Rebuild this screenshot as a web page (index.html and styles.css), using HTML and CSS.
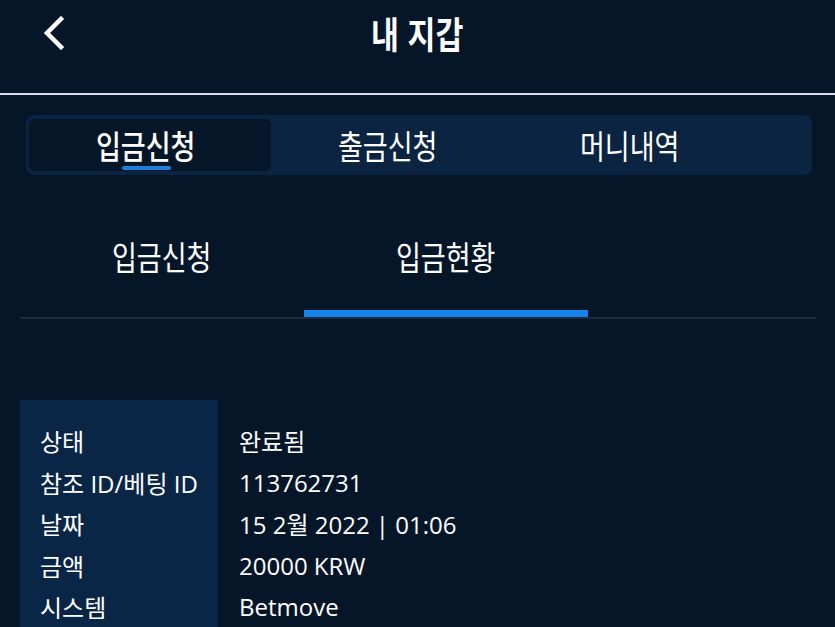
FILE: index.html
```html
<!DOCTYPE html>
<html lang="ko">

<head>
    <meta charset="UTF-8">
    <meta name="viewport" content="width=device-width, initial-scale=1.0">
    <title>내 지갑</title>
    <link rel="stylesheet" href="styles.css">
</head>

<body>
    <div class="header">
        <a class="back" href="#">
            <svg width="24" height="34" viewBox="0 0 24 34">
                <polyline points="20,3 6,17 20,31" fill="none" stroke="#fff" stroke-width="4.5" stroke-linecap="square" />
            </svg>
        </a>
        <h1 class="title"><span class="narrow">내 지갑</span></h1>
    </div>

    <div class="tab-group">
        <div class="tab active"><span class="narrow">입금신청</span></div>
        <div class="tab"><span class="narrow">출금신청</span></div>
        <div class="tab"><span class="narrow">머니내역</span></div>
    </div>

    <div class="sub-tabs">
        <div class="sub-tab"><span class="narrow">입금신청</span></div>
        <div class="sub-tab active"><span class="narrow">입금현황</span></div>
    </div>

    <table class="details">
        <tr>
            <th>상태</th>
            <td>완료됨</td>
        </tr>
        <tr>
            <th>참조 ID/베팅 ID</th>
            <td>113762731</td>
        </tr>
        <tr>
            <th>날짜</th>
            <td>15 2월 2022 | 01:06</td>
        </tr>
        <tr>
            <th>금액</th>
            <td>20000 KRW</td>
        </tr>
        <tr>
            <th>시스템</th>
            <td>Betmove</td>
        </tr>
    </table>
</body>

</html>
```

FILE: styles.css
```css
body {
    margin: 0;
    background-color: #061629;
    color: #fff;
    font-family: "Noto Sans CJK KR", sans-serif;
    overflow: hidden;
}

.narrow {
    display: inline-block;
    transform: scaleX(0.82);
}

.header {
    height: 93px;
    border-bottom: 2px solid #d8dde3;
    position: relative;
}

.back {
    position: absolute;
    left: 41px;
    top: 16px;
}

.title {
    margin: 0;
    padding-top: 10px;
    text-align: center;
    font-size: 37px;
    font-weight: bold;
    line-height: 46px;
}

.tab-group {
    display: flex;
    margin: 20px 23px 0 26px;
    padding: 4px 3px;
    height: 52px;
    background-color: #0a2442;
    border-radius: 8px;
}

.tab {
    width: 242px;
    padding-right: 8px;
    box-sizing: border-box;
    text-align: center;
    font-size: 33px;
    font-weight: normal;
    line-height: 52px;
    border-radius: 6px;
    position: relative;
}

.tab.active {
    background-color: #061629;
    font-weight: 500;
}

.tab.active::after {
    content: "";
    position: absolute;
    left: 93px;
    bottom: 1px;
    width: 49px;
    height: 4px;
    border-radius: 2px;
    background-color: #1e80da;
}

.sub-tabs {
    display: flex;
    margin: 42px 19px 0 20px;
    border-bottom: 2px solid #1b2a3c;
}

.sub-tab {
    width: 284px;
    height: 100px;
    text-align: center;
    font-size: 33px;
    line-height: 78px;
    box-sizing: border-box;
}

.sub-tab.active {
    border-bottom: 7px solid #1683ec;
    margin-bottom: -1px;
}

.details {
    margin: 81px 0 0 20px;
    border-collapse: collapse;
    font-family: "Open Sans", "Noto Sans CJK KR", sans-serif;
    font-size: 24px;
}

.details tr:first-child th,
.details tr:first-child td {
    padding-top: 20px;
}

.details th {
    width: 158px;
    padding: 0 20px;
    text-align: left;
    font-weight: normal;
    background-color: #0a2646;
    height: 41.5px;
}

.details td {
    padding: 0 21px;
}
```
